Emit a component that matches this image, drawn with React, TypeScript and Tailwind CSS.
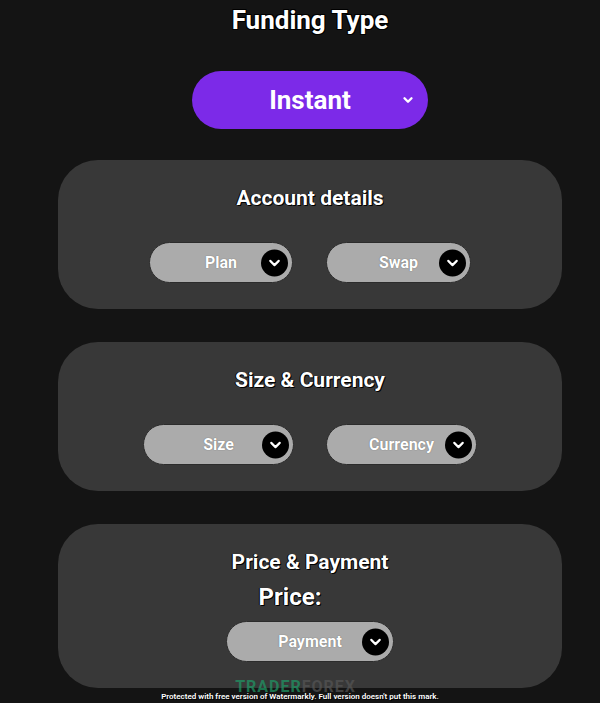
import { ChevronDown } from "lucide-react";

type PillProps = {
  label: string;
  width: string;
};

function SelectPill({ label, width }: PillProps) {
  return (
    <button
      type="button"
      className={`relative flex h-[41px] items-center justify-center rounded-full border border-[#2c2c2c] bg-[#ababab] ${width}`}
    >
      <span className="text-[16px] font-bold text-white [text-shadow:0_0_1px_#555]">
        {label}
      </span>
      <span className="absolute right-[4px] top-1/2 flex h-[27px] w-[27px] -translate-y-1/2 items-center justify-center rounded-full bg-black">
        <ChevronDown className="h-[17px] w-[17px] text-white" strokeWidth={3} />
      </span>
    </button>
  );
}

function Card({ title, children }: { title: string; children: React.ReactNode }) {
  return (
    <section className="flex w-[504px] flex-col items-center rounded-[40px] bg-[#383838] pb-[26px] pt-[24px]">
      <h2 className="text-[21px] font-bold leading-[28px] text-white [text-shadow:1px_1px_0_#000,-1px_0_0_#000]">
        {title}
      </h2>
      {children}
    </section>
  );
}

export default function App() {
  return (
    <div className="relative min-h-[703px] w-[600px] bg-[#141414] pl-[20px] font-['Roboto',sans-serif]">
      <div className="flex flex-col items-center pt-[5px]">
        <h1 className="text-[26px] font-bold leading-[30px] text-white [text-shadow:1px_1px_0_#000,-1px_-1px_0_#000,1px_-1px_0_#000,-1px_1px_0_#000]">
          Funding Type
        </h1>

        <button
          type="button"
          className="relative mt-[36px] flex h-[58px] w-[236px] items-center justify-center rounded-full bg-[#7c2ae8]"
        >
          <span className="text-[26px] font-bold text-white">Instant</span>
          <ChevronDown
            className="absolute right-[13px] top-1/2 h-[14px] w-[14px] -translate-y-1/2 text-white"
            strokeWidth={4}
          />
        </button>

        <div className="mt-[31px] flex flex-col gap-[33px]">
          {/* Account details */}
          <Card title="Account details">
            <div className="mt-[30px] flex gap-[33px]">
              <SelectPill label="Plan" width="w-[144px]" />
              <SelectPill label="Swap" width="w-[145px]" />
            </div>
          </Card>

          {/* Size & Currency */}
          <Card title="Size & Currency">
            <div className="mt-[30px] flex gap-[32px]">
              <SelectPill label="Size" width="w-[151px]" />
              <SelectPill label="Currency" width="w-[151px]" />
            </div>
          </Card>

          {/* Price & Payment */}
          <Card title="Price & Payment">
            <div className="mt-[5px] flex items-center">
              <span className="text-[24px] font-bold leading-[32px] text-white [text-shadow:1px_1px_0_#000,-1px_0_0_#000]">
                Price:
              </span>
              <span className="w-[40px]" />
            </div>
            <div className="mt-[8px]">
              <SelectPill label="Payment" width="w-[168px]" />
            </div>
          </Card>
        </div>
      </div>

      {/* watermark strip */}
      <div className="pointer-events-none absolute left-0 right-0 top-[682px] flex justify-center">
        <div className="relative">
          <span className="absolute left-[74px] top-[-7px] text-[16px] font-bold tracking-[1px] opacity-70">
            <span className="text-[#1f9a66]">TRADER</span>
            <span className="text-[#555]">FOREX</span>
          </span>
          <span className="relative text-[8px] font-semibold text-white [text-shadow:1px_1px_0_#000]">
            Protected with free version of Watermarkly. Full version doesn't put this mark.
          </span>
        </div>
      </div>
    </div>
  );
}
